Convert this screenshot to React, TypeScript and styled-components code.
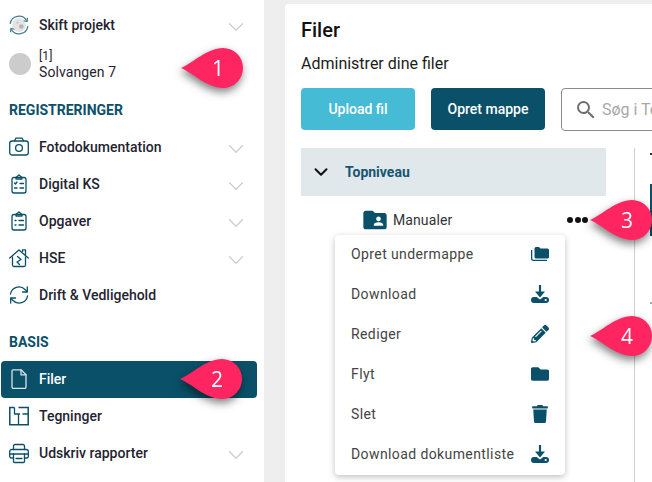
import React from "react";
import styled, { createGlobalStyle } from "styled-components";
import { ChevronDown } from "lucide-react";
import { MdFolderShared, MdSearch } from "react-icons/md";
import { FaFolder, FaPencilAlt, FaTrash } from "react-icons/fa";

const Global = createGlobalStyle`
  html, body { margin: 0; padding: 0; height: 100%; overflow: hidden; background: #eeeeee; }
  body { font-family: Roboto, "Liberation Sans", sans-serif; color: #212121; }
  #root { height: 100%; }
`;

const teal = "#0a5068";

const Page = styled.div`
  position: relative;
  width: 652px;
  height: 482px;
  display: flex;
  overflow: hidden;
`;

const Sidebar = styled.aside`
  width: 264px;
  height: 482px;
  flex: none;
  background: #fff;
  display: flex;
  flex-direction: column;
  padding-top: 7px;
  box-sizing: border-box;
`;

const NavRow = styled.div<{ $active?: boolean }>`
  height: 37px;
  width: 256px;
  margin-left: 1px;
  flex: none;
  box-sizing: border-box;
  padding: 0 0 1px 8px;
  display: flex;
  align-items: center;
  border-radius: 4px;
  font-size: 14px;
  font-weight: 500;
  background: ${(p) => (p.$active ? teal : "transparent")};
  color: ${(p) => (p.$active ? "#fff" : "#1f2430")};
`;

const IconSlot = styled.span<{ $active?: boolean }>`
  width: 20px;
  height: 20px;
  margin-right: 10px;
  display: flex;
  align-items: center;
  justify-content: center;
  flex: none;
  color: ${(p) => (p.$active ? "#d8e4e8" : teal)};
`;

const Label = styled.span`
  flex: 1;
`;

const Chevron = styled(ChevronDown)`
  width: 26px;
  height: 26px;
  color: #cccccc;
  margin: 4px 8px 0 0;
  stroke-width: 1.1;
`;

const Project = styled.div`
  display: flex;
  align-items: center;
  height: 40px;
  padding-left: 9px;
`;

const Avatar = styled.span`
  width: 22px;
  height: 22px;
  border-radius: 50%;
  background: #cccccc;
  margin-right: 8px;
`;

const ProjectText = styled.div`
  font-size: 14px;
  line-height: 16px;
  letter-spacing: 0.1px;
  font-weight: 400;
  color: #1f2430;
`;

const ProjectCode = styled.div`
  font-size: 12px;
  line-height: 16px;
`;

const SectionTitle = styled.div<{ $top: number }>`
  margin-top: ${(p) => p.$top}px;
  margin-bottom: 11px;
  padding-left: 9px;
  font-size: 14px;
  line-height: 16px;
  font-weight: 700;
  color: ${teal};
`;

const Main = styled.main`
  flex: 1;
  padding: 4px 0 0 21px;
  min-width: 0;
`;

const Card = styled.section`
  height: 490px;
  width: 400px;
  background: #fff;
  border-radius: 4px;
  box-sizing: border-box;
  padding: 14px 0 0 16px;
  position: relative;
`;

const Title = styled.h1`
  margin: 0;
  font-size: 20px;
  line-height: 24px;
  font-weight: 500;
  color: #111;
`;

const Subtitle = styled.div`
  margin-top: 13px;
  font-size: 16px;
  line-height: 18px;
  font-weight: 400;
  color: #1c1c1c;
`;

const Toolbar = styled.div`
  display: flex;
  gap: 16px;
  margin-top: 15px;
`;

const Button = styled.button<{ $light?: boolean }>`
  width: 114px;
  height: 42px;
  border: 0;
  border-radius: 4px;
  font-family: inherit;
  font-size: 14px;
  font-weight: 500;
  color: #fff;
  padding: 0;
  flex: none;
  background: ${(p) => (p.$light ? "#46bbd6" : teal)};
`;

const SearchBox = styled.div`
  height: 43px;
  width: 200px;
  flex: none;
  box-sizing: border-box;
  border: 1px solid #8a8a8a;
  border-radius: 4px;
  display: flex;
  align-items: center;
  padding-left: 12px;
  gap: 4px;
  color: #a8a8a8;
  font-size: 16px;
  white-space: nowrap;
`;

const SearchIcon = styled(MdSearch)`
  width: 24px;
  height: 24px;
  color: #6f6f6f;
  flex: none;
`;

const Content = styled.div`
  display: flex;
  margin-top: 17px;
`;

const Tree = styled.div`
  width: 334px;
  flex: none;
  position: relative;
  height: 334px;
  border-right: 1px solid #cfcfcf;
  box-sizing: border-box;
`;

const TopRow = styled.div`
  width: 305px;
  height: 48px;
  background: #e0e8eb;
  display: flex;
  align-items: center;
  padding-left: 9px;
  box-sizing: border-box;
  font-size: 14px;
  font-weight: 700;
  color: #15566e;
`;

const TopChevron = styled(ChevronDown)`
  width: 22px;
  height: 22px;
  color: #111;
  margin-right: 13px;
  stroke-width: 2.2;
`;

const FolderRow = styled.div`
  display: flex;
  align-items: center;
  height: 48px;
  padding-left: 60px;
  width: 287px;
  box-sizing: border-box;
  font-size: 14px;
  letter-spacing: 0.1px;
  color: #333;
`;

const FolderIcon = styled(MdFolderShared)`
  width: 28px;
  height: 28px;
  color: ${teal};
  margin-right: 4px;
`;

const Dots = styled.span`
  margin-left: auto;
  display: flex;
  gap: 1.5px;
`;

const Dot = styled.i`
  width: 6px;
  height: 6px;
  border-radius: 50%;
  background: #111;
`;

const Menu = styled.div`
  position: absolute;
  left: 34px;
  top: 87px;
  width: 230px;
  background: #fff;
  border-radius: 4px;
  box-shadow: 0 2px 6px rgba(0, 0, 0, 0.25);
  display: flex;
  flex-direction: column;
`;

const MenuItem = styled.div`
  height: 40px;
  display: flex;
  align-items: center;
  justify-content: space-between;
  padding: 0 16px 2px;
  box-sizing: border-box;
  font-size: 14px;
  letter-spacing: 0.4px;
  color: #444;
`;

const MenuIcon = styled.span`
  width: 18px;
  height: 18px;
  display: flex;
  align-items: center;
  justify-content: center;
  color: ${teal};
`;

const RightPane = styled.div`
  margin-left: 15px;
  display: flex;
  flex-direction: column;
`;

const Tick = styled.i<{ $top: number; $color: string }>`
  width: 2px;
  height: 2px;
  margin-top: ${(p) => p.$top}px;
  background: ${(p) => p.$color};
`;

const Edge = styled.div`
  width: 3px;
  height: 52px;
  background: ${teal};
  margin-top: 29px;
`;

const PinWrap = styled.div<{ $x: number; $y: number }>`
  position: absolute;
  left: ${(p) => p.$x}px;
  top: ${(p) => p.$y}px;
  width: 62px;
  height: 40px;
  filter: drop-shadow(-1px 4px 4px rgba(0, 0, 0, 0.5));
`;

const PinNumber = styled.span`
  position: absolute;
  left: 17px;
  width: 40px;
  top: 0;
  line-height: 40px;
  text-align: center;
  color: #fff;
  font-size: 21px;
  font-family: "Open Sans", sans-serif;
  font-weight: 400;
`;

const Pin = ({ x, y, n }: { x: number; y: number; n: number }) => (
  <PinWrap $x={x} $y={y}>
    <svg width="62" height="40" viewBox="0 0 62 40">
      <path
        d="M0 20 C12 15 26 0 42 0 A20 20 0 0 1 42 40 C26 40 12 25 0 20Z"
        fill="#ff2560"
      />
    </svg>
    <PinNumber>{n}</PinNumber>
  </PinWrap>
);

const Svg = ({ children, size = 20 }: { children: React.ReactNode; size?: number }) => (
  <svg
    width={size}
    height={size}
    viewBox="0 0 20 20"
    fill="none"
    stroke="currentColor"
    strokeWidth="1.3"
    strokeLinecap="round"
    strokeLinejoin="round"
  >
    {children}
  </svg>
);

const SwitchLogo = () => (
  <svg width="26" height="26" viewBox="0 0 26 26" fill="none">
    <circle cx="13" cy="13" r="9" fill="#e4e4e4" />
    <circle cx="16" cy="15" r="3" fill="#b5b5b5" />
    <circle cx="11" cy="10" r="1.5" fill="#c8c8c8" />
    <path d="M1.5 11.5 A11.5 11.5 0 0 1 23 7.5" stroke="#3f7d91" strokeWidth="1.6" />
    <path d="M24.5 14.5 A11.5 11.5 0 0 1 3 18.5" stroke="#3f7d91" strokeWidth="1.6" />
    <path d="M24 3.5 L23.5 8.5 L19 7.5" stroke="#3f7d91" strokeWidth="1.6" />
    <path d="M2 22.5 L2.5 17.5 L7 18.5" stroke="#3f7d91" strokeWidth="1.6" />
  </svg>
);

const CameraIcon = () => (
  <Svg>
    <rect x="0.7" y="4" width="18.6" height="14" rx="2.5" />
    <path d="M5.5 4 L6.8 1.2 H13.2 L14.5 4" />
    <circle cx="10" cy="11" r="3.4" />
  </Svg>
);

const ClipCheckIcon = () => (
  <Svg>
    <rect x="3" y="3.5" width="14" height="15.5" rx="2" />
    <path d="M7 3.5 L10 1 L13 3.5 V5 H7Z" />
    <path d="M5.5 9 L6.5 10 L8 8 M11 9.5 H14.5 M5.5 14 H8 M11 14 H14.5" />
  </Svg>
);

const ClipListIcon = () => (
  <Svg>
    <rect x="3" y="3.5" width="14" height="15.5" rx="2" />
    <path d="M7 3.5 L10 1 L13 3.5 V5 H7Z" />
    <path d="M6 9.5 H7 M10 9.5 H14.5 M6 14 H7 M10 14 H14.5" />
  </Svg>
);

const HomeIcon = () => (
  <Svg>
    <path d="M0.7 10 L10 2 L19.3 10" />
    <path d="M3.5 9 V17 A1.5 1.5 0 0 0 5 18.5 H15 A1.5 1.5 0 0 0 16.5 17 V9" />
    <path d="M13.5 3.5 V1.8 H16.5 V7" />
    <path d="M8.5 8.5 L12 11.5 L8 14 L10.5 16.5" />
  </Svg>
);

const SyncIcon = () => (
  <Svg>
    <path d="M1.5 9 A8.5 8.5 0 0 1 16 4.5 L18 6.5" />
    <path d="M18.3 2 V7 H13.5" />
    <path d="M18.5 11 A8.5 8.5 0 0 1 4 15.5 L2 13.5" />
    <path d="M1.7 18 V13 H6.5" />
  </Svg>
);

const FileIcon = () => (
  <Svg>
    <path d="M4 0.8 H12 L17 5.8 V18 A1.5 1.5 0 0 1 15.5 19.5 H4.5 A1.5 1.5 0 0 1 3 18 V1.8 A1 1 0 0 1 4 0.8Z" />
    <path d="M12 0.8 V5.8 H17" />
  </Svg>
);

const PlanIcon = () => (
  <Svg>
    <path d="M5.5 1.5 H0.8 V18.7 H19.2 V1.5 H9.5" strokeLinecap="butt" strokeLinejoin="miter" strokeWidth="1.5" />
    <path d="M5.5 1.5 V8 H11 M13.5 8 H19.2 M9.5 8 V18.7" strokeLinecap="butt" />
  </Svg>
);

const PrinterIcon = () => (
  <Svg size={21}>
    <path d="M4.5 6 V2.5 A1.5 1.5 0 0 1 6 1 H14 A1.5 1.5 0 0 1 15.5 2.5 V6" />
    <path d="M4.5 14.5 H2.5 A1.8 1.8 0 0 1 0.7 12.7 V8 A2 2 0 0 1 2.7 6 H17.3 A2 2 0 0 1 19.3 8 V12.7 A1.8 1.8 0 0 1 17.5 14.5 H15.5" />
    <path d="M1 10.5 H19" />
    <path d="M4.5 10.5 V18 A1 1 0 0 0 5.5 19 H14.5 A1 1 0 0 0 15.5 18 V10.5" />
    <path d="M7 15 H13" />
  </Svg>
);

const FoldersGlyph = () => (
  <svg width="18" height="18" viewBox="0 0 18 18" fill="currentColor">
    <path d="M3.5 3.5 A1.5 1.5 0 0 1 5 2 H8 L9.5 3.5 H16.5 A1.5 1.5 0 0 1 18 5 V12 A1.5 1.5 0 0 1 16.5 13.5 H5 A1.5 1.5 0 0 1 3.5 12Z" />
    <path d="M0 5 H1.3 V13.5 A1.2 1.2 0 0 0 2.5 14.7 H16 V16 H2.5 A2.5 2.5 0 0 1 0 13.5Z" />
  </svg>
);

const DownloadGlyph = () => (
  <svg width="18" height="18" viewBox="0 0 18 18" fill="currentColor">
    <path d="M7.9 0 H10.1 V6.5 H14 L9 12.6 L4 6.5 H7.9Z" />
    <path d="M0 15 A3 3 0 0 1 3 12 H5.6 L9 14.4 L12.4 12 H15 A3 3 0 0 1 18 15 A3 3 0 0 1 15 18 H3 A3 3 0 0 1 0 15Z" />
    <circle cx="14.7" cy="15" r="1.1" fill="#fff" />
  </svg>
);

const items: { label: string; icon: React.ReactNode }[] = [
  { label: "Opret undermappe", icon: <FoldersGlyph /> },
  { label: "Download", icon: <DownloadGlyph /> },
  { label: "Rediger", icon: <FaPencilAlt size={18} /> },
  { label: "Flyt", icon: <FaFolder size={18} /> },
  { label: "Slet", icon: <FaTrash size={18} /> },
  { label: "Download dokumentliste", icon: <DownloadGlyph /> },
];

export default function App() {
  return (
    <Page>
      <Global />
      <Sidebar>
        <NavRow>
          <IconSlot><SwitchLogo /></IconSlot>
          <Label>Skift projekt</Label>
          <Chevron />
        </NavRow>
        <Project>
          <Avatar />
          <ProjectText>
            <ProjectCode>[1]</ProjectCode>
            Solvangen 7
          </ProjectText>
        </Project>
        <SectionTitle $top={18}>REGISTRERINGER</SectionTitle>
        <NavRow><IconSlot><CameraIcon /></IconSlot><Label>Fotodokumentation</Label><Chevron /></NavRow>
        <NavRow><IconSlot><ClipCheckIcon /></IconSlot><Label>Digital KS</Label><Chevron /></NavRow>
        <NavRow><IconSlot><ClipListIcon /></IconSlot><Label>Opgaver</Label><Chevron /></NavRow>
        <NavRow><IconSlot><HomeIcon /></IconSlot><Label>HSE</Label><Chevron /></NavRow>
        <NavRow><IconSlot><SyncIcon /></IconSlot><Label>Drift &amp; Vedligehold</Label></NavRow>
        <SectionTitle $top={20}>BASIS</SectionTitle>
        <NavRow $active><IconSlot $active><FileIcon /></IconSlot><Label>Filer</Label></NavRow>
        <NavRow><IconSlot><PlanIcon /></IconSlot><Label>Tegninger</Label></NavRow>
        <NavRow><IconSlot><PrinterIcon /></IconSlot><Label>Udskriv rapporter</Label><Chevron /></NavRow>
      </Sidebar>
      <Main>
        <Card>
          <Title>Filer</Title>
          <Subtitle>Administrer dine filer</Subtitle>
          <Toolbar>
            <Button $light>Upload fil</Button>
            <Button>Opret mappe</Button>
            <SearchBox><SearchIcon />Søg i Topniveau</SearchBox>
          </Toolbar>
          <Content>
            <Tree>
              <TopRow><TopChevron />Topniveau</TopRow>
              <FolderRow>
                <FolderIcon />
                Manualer
                <Dots><Dot /><Dot /><Dot /></Dots>
              </FolderRow>
              <Menu>
                {items.map((it) => (
                  <MenuItem key={it.label}>
                    {it.label}
                    <MenuIcon>{it.icon}</MenuIcon>
                  </MenuItem>
                ))}
              </Menu>
            </Tree>
            <RightPane>
              <Tick $top={5} $color="#333" />
              <Edge />
              <Tick $top={66} $color="#aaa" />
            </RightPane>
          </Content>
        </Card>
      </Main>
      <Pin x={181} y={48} n={1} />
      <Pin x={180} y={359} n={2} />
      <Pin x={590} y={200} n={3} />
      <Pin x={590} y={316} n={4} />
    </Page>
  );
}
